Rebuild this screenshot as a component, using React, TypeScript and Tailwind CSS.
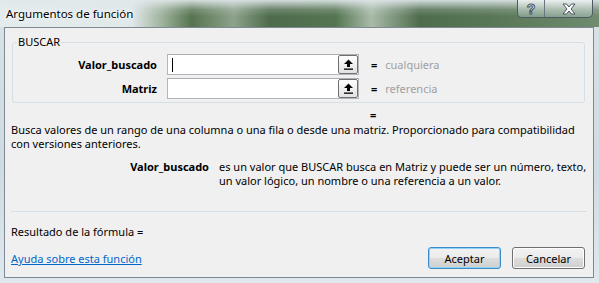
import React from "react";

function UpArrow() {
  return (
    <svg width="11" height="11" viewBox="0 0 11 11">
      <path d="M5.5 0.5 L10 5 H7 V8 H4 V5 H1 Z" fill="#000" />
      <rect x="1" y="9.5" width="9" height="1.3" fill="#000" />
    </svg>
  );
}

function RefButton() {
  return (
    <div className="w-[20px] h-[19px] border border-[#707070] rounded-[2px] bg-[linear-gradient(180deg,#ffffff_0%,#f0f0f0_50%,#e2e2e2_100%)] flex items-center justify-center">
      <UpArrow />
    </div>
  );
}

function ArgRow({ label, hint, caret }: { label: string; hint: string; caret?: boolean }) {
  return (
    <div className="flex items-center h-[21px]">
      <div className="w-[144px] text-right font-bold">{label}</div>
      <div className="ml-[10px] w-[192px] h-[21px] border border-[#b3b6bd] border-t-[#abadb3] bg-white flex items-center">
        <div className="flex-1 flex items-center">
          {caret && <div className="ml-[4px] w-[1px] h-[14px] bg-black" />}
        </div>
        <RefButton />
      </div>
      <span className="ml-[12px] font-bold">=</span>
      <span className="ml-[8px] text-[#a0a0a0]">{hint}</span>
    </div>
  );
}

function DlgButton({ children, focused }: { children: React.ReactNode; focused?: boolean }) {
  return (
    <div
      className={
        focused
          ? "w-[73px] h-[22px] rounded-[3px] border border-[#3c8ccc] shadow-[inset_0_0_0_1px_#8fd4f8] bg-[linear-gradient(180deg,#f2f2f2_0%,#ebebeb_50%,#dddddd_51%,#cfcfcf_100%)] flex items-center justify-center"
          : "w-[73px] h-[22px] rounded-[3px] border border-[#707070] shadow-[inset_0_0_0_1px_#fcfcfc] bg-[linear-gradient(180deg,#f2f2f2_0%,#ebebeb_50%,#dddddd_51%,#cfcfcf_100%)] flex items-center justify-center"
      }
    >
      {children}
    </div>
  );
}

export default function App() {
  return (
    <div className="w-[599px] h-[283px] overflow-hidden flex flex-col bg-[linear-gradient(180deg,#d8e2e6_0%,#cfdbe2_60%,#dfe8ed_100%)] font-['Segoe_UI','Noto_Sans',sans-serif] text-[11px] leading-[13px] text-black">
      <div className="h-[27px] flex items-start bg-[linear-gradient(180deg,rgba(225,232,235,0.9)_0%,rgba(225,232,235,0.2)_35%,rgba(225,232,235,0)_60%),linear-gradient(90deg,#e4ecee_0%,#e0e8ea_22%,#9fb39d_27%,#56744f_32%,#8da28b_39%,#4e6c4c_45%,#557552_56%,#a9bba8_62%,#4e6d4c_70%,#587756_82%,#708b6f_100%)]">
        <span className="ml-[6px] mt-[6px] text-[11.5px] leading-[15px] text-black [text-shadow:0_0_6px_#ffffff,0_0_3px_#ffffff]">
          Argumentos de función
        </span>
        <div className="ml-auto mr-[6px] flex h-[18px] rounded-b-[5px] border border-t-0 border-[#4d5a64] bg-[linear-gradient(180deg,rgba(255,255,255,0.5)_0%,rgba(230,238,242,0.45)_50%,rgba(200,214,222,0.35)_100%)] overflow-hidden">
          <div className="w-[27px] h-full flex items-center justify-center border-r border-[#6b7780]">
            <svg width="12" height="14" viewBox="0 0 12 14">
              <text x="6" y="12" textAnchor="middle" fontFamily="Liberation Sans, sans-serif" fontWeight="bold" fontSize="14" fill="#ffffff" stroke="#4a5560" strokeWidth="1">?</text>
            </svg>
          </div>
          <div className="w-[47px] h-full flex items-center justify-center">
            <svg width="16" height="12" viewBox="0 0 16 12">
              <path d="M2 1 H5.5 L8 4 L10.5 1 H14 L10 6 L14 11 H10.5 L8 8 L5.5 11 H2 L6 6 Z" fill="#ffffff" stroke="#4a5560" strokeWidth="1" strokeLinejoin="round" />
            </svg>
          </div>
        </div>
      </div>

      <div className="flex-1 ml-[4px] mr-[5px] mb-[5px] border border-[#7d8a93] bg-[#f0f0f0] flex flex-col">
        <div className="relative ml-[7px] mr-[8px] mt-[14px] border border-[#d5dfe5] rounded-[3px] pt-[11px] pb-[3px] flex flex-col gap-[3px]">
          <span className="absolute left-[4px] -top-[8px] px-[1px] bg-[#f0f0f0]">BUSCAR</span>
          <ArgRow label="Valor_buscado" hint="cualquiera" caret />
          <ArgRow label="Matriz" hint="referencia" />
        </div>

        <div className="mt-[5px] pl-[365px] font-bold">=</div>

        <div className="mt-[2px] pl-[6px] whitespace-nowrap leading-[14px]">
          <div>Busca valores de un rango de una columna o una fila o desde una matriz. Proporcionado para compatibilidad</div>
          <div>con versiones anteriores.</div>
        </div>

        <div className="mt-[9px] flex whitespace-nowrap leading-[14px]">
          <div className="w-[204px] text-right font-bold">Valor_buscado</div>
          <div className="ml-[10px]">
            <div>es un valor que BUSCAR busca en Matriz y puede ser un número, texto,</div>
            <div>un valor lógico, un nombre o una referencia a un valor.</div>
          </div>
        </div>

        <div className="mt-[23px] ml-[6px] mr-[6px] h-[1px] bg-[#d5dfe5]" />

        <div className="mt-[13px] pl-[6px]">Resultado de la fórmula =</div>

        <div className="mt-[9px] flex items-start">
          <a className="ml-[6px] mt-[5px] text-[#0066cc] underline">Ayuda sobre esta función</a>
          <div className="ml-auto mr-[8px] flex gap-[11px]">
            <DlgButton focused>Aceptar</DlgButton>
            <DlgButton>Cancelar</DlgButton>
          </div>
        </div>
      </div>
    </div>
  );
}
